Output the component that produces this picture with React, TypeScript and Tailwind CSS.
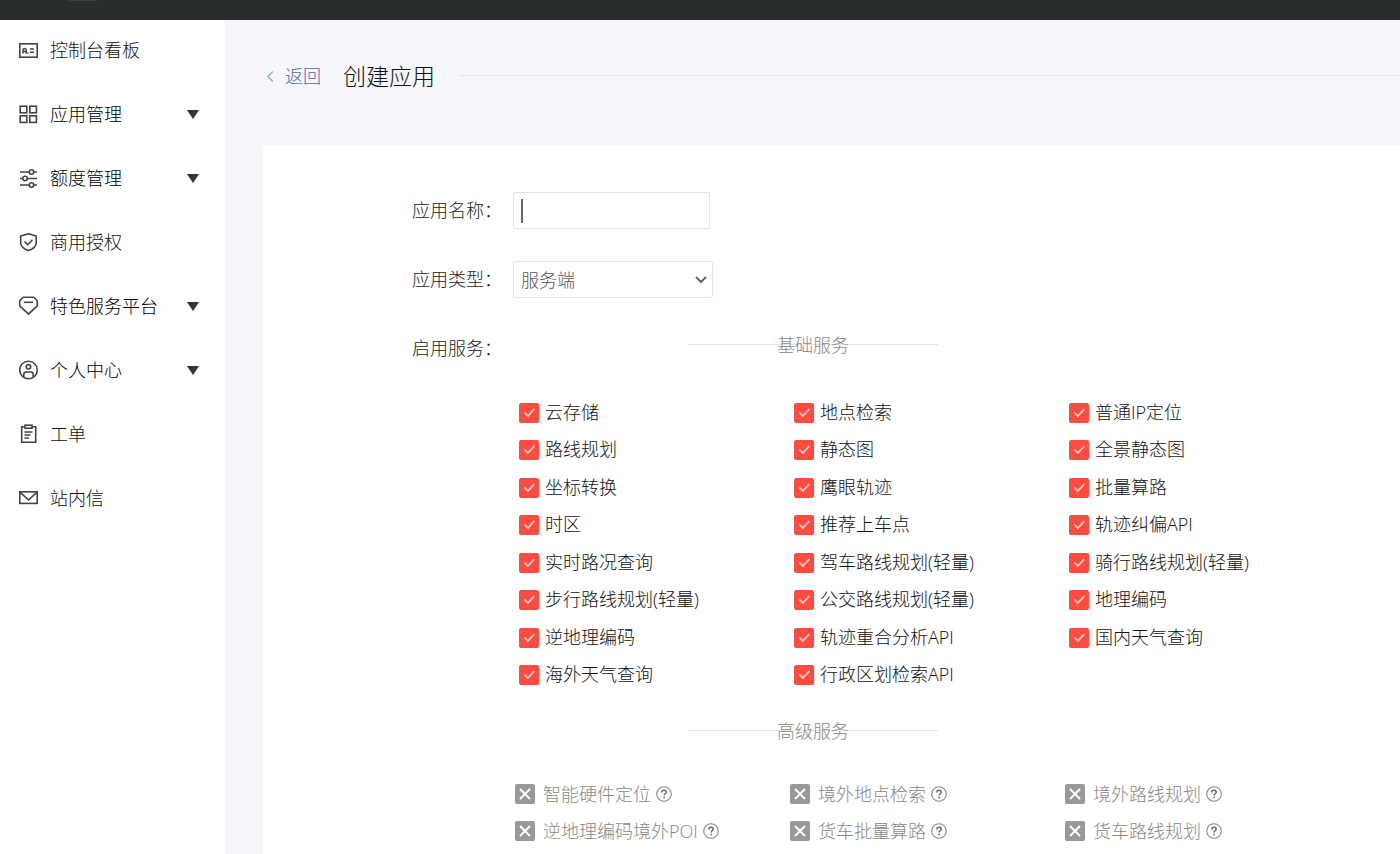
import React, { useState } from "react";

type IconProps = { children: React.ReactNode };

const Icon: React.FC<IconProps> = ({ children }) => (
  <svg className="h-5 w-5 shrink-0" viewBox="0 0 20 20" fill="none" stroke="#444" strokeWidth="1.6" aria-hidden="true">
    {children}
  </svg>
);

const menu = [
  {
    name: "控制台看板",
    icon: (
      <Icon>
        <rect x="0.8" y="3.8" width="17.4" height="13.4" />
        <path d="M4 13.600V10.200a1.600 1.600 0 0 1 3.200 0v3.400M4 11.600h3.200" strokeWidth="1.500" />
        <path d="M8.600 13.600V12.200M11 9h4M11 12.200h4" strokeWidth="1.500" />
      </Icon>
    ),
  },
  {
    name: "应用管理",
    expandable: true,
    icon: (
      <Icon>
        <rect x="1.2" y="2.2" width="6.6" height="6.6" />
        <rect x="10.8" y="2.2" width="6.6" height="6.6" />
        <rect x="1.2" y="11.8" width="6.6" height="6.6" />
        <rect x="10.8" y="11.8" width="6.6" height="6.6" />
      </Icon>
    ),
  },
  {
    name: "额度管理",
    expandable: true,
    icon: (
      <Icon>
        <path d="M1 4h9M15 4h3M1 10.500h2.500M8.500 10.500H18M1 17h9M15 17h3" />
        <circle cx="12.500" cy="4" r="2.200" />
        <circle cx="6" cy="10.500" r="2.200" />
        <circle cx="12.500" cy="17" r="2.200" />
      </Icon>
    ),
  },
  {
    name: "商用授权",
    icon: (
      <Icon>
        <path d="M9.500 1.700 17.200 4v7c0 3.600-3.500 6-7.700 7.600C5.300 17 1.700 14.600 1.700 11V4z" strokeLinejoin="round" />
        <path d="m5.500 9.700 3.200 3 4.800-5" />
      </Icon>
    ),
  },
  {
    name: "特色服务平台",
    expandable: true,
    icon: (
      <Icon>
        <path d="M4.200 1.200h10.600l3.500 3.600v5L9.500 18.200.7 9.800v-5z" strokeLinejoin="round" />
        <path d="M5 6.300h9" />
      </Icon>
    ),
  },
  {
    name: "个人中心",
    expandable: true,
    icon: (
      <Icon>
        <circle cx="9.500" cy="10" r="8.800" />
        <circle cx="9.500" cy="6.800" r="2.200" />
        <path d="M4.800 17v-2.600c0-1.500 1-2.400 2.400-2.400h4.600c1.400 0 2.400.9 2.400 2.400V17" />
      </Icon>
    ),
  },
  {
    name: "工单",
    icon: (
      <Icon>
        <path d="M6 2.700H2.700v15.600h14V2.700H13" />
        <rect x="6" y="1.200" width="7" height="3" />
        <path d="M5.500 8h8M5.500 11h6M5.500 14h4.500" strokeWidth="1.300" />
      </Icon>
    ),
  },
  {
    name: "站内信",
    icon: (
      <Icon>
        <rect x="0.800" y="3.800" width="17.400" height="11.600" />
        <path d="m1 4.200 8.500 7.800L18 4.200" />
      </Icon>
    ),
  },
];

const basicServices = [
  "云存储", "地点检索", "普通IP定位",
  "路线规划", "静态图", "全景静态图",
  "坐标转换", "鹰眼轨迹", "批量算路",
  "时区", "推荐上车点", "轨迹纠偏API",
  "实时路况查询", "驾车路线规划(轻量)", "骑行路线规划(轻量)",
  "步行路线规划(轻量)", "公交路线规划(轻量)", "地理编码",
  "逆地理编码", "轨迹重合分析API", "国内天气查询",
  "海外天气查询", "行政区划检索API",
];

const advancedServices = [
  "智能硬件定位", "境外地点检索", "境外路线规划",
  "逆地理编码境外POI", "货车批量算路", "货车路线规划",
];

const Sidebar: React.FC = () => (
  <nav className="w-[225px] shrink-0 bg-white pt-[18px]">
    <ul className="flex flex-col gap-10">
      {menu.map((item) => (
        <li key={item.name}>
          {item.expandable ? (
            <button type="button" className="flex h-6 w-full items-center gap-[11px] pr-[26px] pl-[19px] text-black">
              {item.icon}
              <span>{item.name}</span>
              <svg className="ml-auto h-[9px] w-3" viewBox="0 0 12 9" fill="#333" aria-hidden="true">
                <path d="M0 0h12L6 9z" />
              </svg>
            </button>
          ) : (
            <a href="#" className="flex h-6 items-center gap-[11px] pl-[19px] text-[#111]">
              {item.icon}
              <span>{item.name}</span>
            </a>
          )}
        </li>
      ))}
    </ul>
  </nav>
);

const SectionTitle: React.FC<{ children: string }> = ({ children }) => (
  <h2 className="relative ml-[175px] w-[250px] text-center leading-[30px] text-[#888]">
    <span className="absolute inset-x-0 top-[14px] h-px bg-[#e6e6e6]" />
    <span className="relative">{children}</span>
  </h2>
);

const BasicService: React.FC<{ name: string }> = ({ name }) => {
  const [checked, setChecked] = useState(true);
  return (
    <label className="flex items-start gap-[6px] leading-[18px] text-[#111]">
      <span className="relative h-5 w-5 shrink-0">
        <input
          type="checkbox"
          checked={checked}
          onChange={() => setChecked(!checked)}
          className="block h-5 w-5 appearance-none rounded-xs border border-[#ff4c41] checked:bg-[#ff4c41]"
        />
        <svg className="pointer-events-none absolute inset-0 h-5 w-5" viewBox="0 0 20 20" fill="none" stroke="#ffd2cf" strokeWidth="1.6" aria-hidden="true">
          <path d="m5.500 9.500 3.400 3.600 6.300-7" />
        </svg>
      </span>
      {name}
    </label>
  );
};

const AdvancedService: React.FC<{ name: string }> = ({ name }) => (
  <div className="flex items-center gap-[5px] leading-5 text-[#888]">
    <label className="flex items-center gap-2">
      <span className="relative h-5 w-5 shrink-0">
        <input type="checkbox" disabled className="block h-5 w-5 appearance-none rounded-xs bg-[#999]" />
        <svg className="pointer-events-none absolute inset-0 h-5 w-5" viewBox="0 0 20 20" fill="none" stroke="#fff" strokeWidth="2" aria-hidden="true">
          <path d="m5 5 10 10M15 5 5 15" />
        </svg>
      </span>
      {name}
    </label>
    <button type="button" aria-label={`${name}说明`}>
      <svg className="h-4 w-4" viewBox="0 0 16 16" fill="none" stroke="#888" aria-hidden="true">
        <circle cx="8" cy="8" r="7.300" strokeWidth="1.100" />
        <path d="M5.800 6.400C5.800 5 6.700 4.200 8 4.200s2.200.8 2.200 2c0 1.500-2.100 1.700-2.100 3.300" stroke="#666" strokeWidth="1.500" />
        <path d="M7.300 10.700h1.600v1.500H7.300z" fill="#666" stroke="none" />
      </svg>
    </button>
  </div>
);

export default function App() {
  const [appName, setAppName] = useState("");

  return (
    <div className="flex min-h-screen flex-col overflow-x-hidden bg-[#f5f7fb] font-['Open_Sans','Noto_Sans_CJK_SC',sans-serif] text-[18px] leading-6 font-light">
      <header className="h-5 shrink-0 bg-[#2a2d2e]">
        <div className="ml-[69px] h-px w-7 bg-[#3a3f42]" />
      </header>
      <div className="flex grow">
        <Sidebar />
        <main className="flex min-w-0 grow flex-col pl-[38px]">
          <div className="flex h-[125px] items-start pt-10">
            <a href="#" className="flex h-8 items-center text-[#4a66b0]">
              <svg className="mr-[7px] h-[15px] w-[15px]" viewBox="0 0 15 15" fill="none" stroke="#9aa9d6" strokeWidth="1.500" aria-hidden="true">
                <path d="M9.800 2.500 5 7.500l4.800 5" />
              </svg>
              返回
            </a>
            <h1 className="ml-[22px] text-[23px] leading-8 text-[#111]">创建应用</h1>
            <hr className="mt-[15px] ml-6 grow border-[#e4e6ec]" />
          </div>

          <form className="grow rounded-tl-sm bg-white pt-[47px] pl-[149px] text-[#222]" onSubmit={(e) => e.preventDefault()}>
            <div className="flex items-start">
              <label htmlFor="app-name" className="w-[101px] shrink-0 pt-[6px]">应用名称：</label>
              <div className="relative">
                <input
                  id="app-name"
                  type="text"
                  value={appName}
                  onChange={(e) => setAppName(e.target.value)}
                  className="peer block h-[37px] w-[197px] rounded-xs border border-[#e1e4ed] px-[7px] text-[#555] outline-none"
                />
                {appName === "" && (
                  <span className="pointer-events-none absolute top-[7px] left-2 h-6 w-[2px] bg-[#666] peer-focus:hidden" />
                )}
              </div>
            </div>

            <div className="mt-8 flex items-start">
              <label htmlFor="app-type" className="w-[101px] shrink-0 pt-[6px]">应用类型：</label>
              <div className="relative">
                <select
                  id="app-type"
                  className="block h-[37px] w-[200px] appearance-none rounded-xs border border-[#e1e4ed] bg-white px-[7px] text-[#555] outline-none"
                >
                  <option>服务端</option>
                  <option>浏览器端</option>
                </select>
                <svg className="pointer-events-none absolute top-[15px] right-[6px] h-2 w-3" viewBox="0 0 12 8" fill="none" stroke="#666" strokeWidth="2" aria-hidden="true">
                  <path d="m1 1 5 5 5-5" />
                </svg>
              </div>
            </div>

            <div className="mt-8 flex items-start">
              <div className="w-[101px] shrink-0 pt-[6px]">启用服务：</div>
              <div className="min-w-0 grow">
                <SectionTitle>基础服务</SectionTitle>
                <div className="mt-[43px] grid auto-rows-[37px_38px] grid-cols-[275px_275px_275px] items-start pl-[6px]">
                  {basicServices.map((name) => (
                    <BasicService key={name} name={name} />
                  ))}
                </div>
                <div className="mt-[13px]">
                  <SectionTitle>高级服务</SectionTitle>
                </div>
                <div className="mt-[38px] grid auto-rows-[37px_38px] grid-cols-[275px_275px_275px] items-start pl-[2px]">
                  {advancedServices.map((name) => (
                    <AdvancedService key={name} name={name} />
                  ))}
                </div>
              </div>
            </div>
          </form>
        </main>
      </div>
    </div>
  );
}
